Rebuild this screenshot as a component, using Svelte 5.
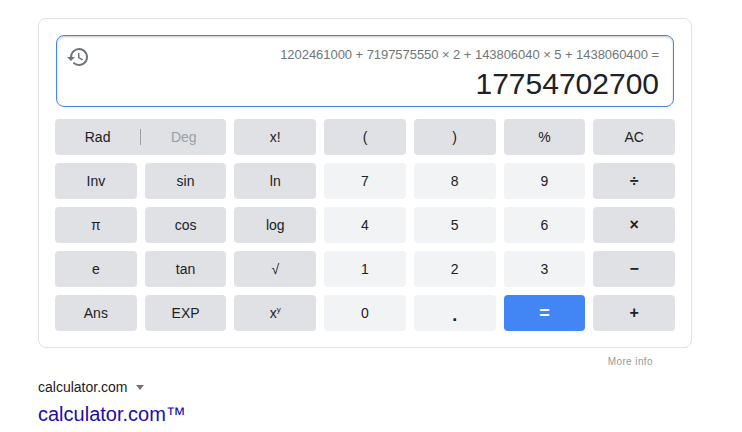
<script>
  // calculator rows below the Rad/Deg toggle, kind picks the key colour
  const firstRow = [
    { label: 'x!', kind: 'fn' },
    { label: '(', kind: 'fn' },
    { label: ')', kind: 'fn' },
    { label: '%', kind: 'fn' },
    { label: 'AC', kind: 'fn' }
  ];

  const rows = [
    [['Inv', 'fn'], ['sin', 'fn'], ['ln', 'fn'], ['7', 'num'], ['8', 'num'], ['9', 'num'], ['÷', 'op']],
    [['π', 'fn'], ['cos', 'fn'], ['log', 'fn'], ['4', 'num'], ['5', 'num'], ['6', 'num'], ['×', 'op']],
    [['e', 'fn'], ['tan', 'fn'], ['√', 'fn'], ['1', 'num'], ['2', 'num'], ['3', 'num'], ['−', 'op']]
  ];
</script>

<div class="page">
  <div class="card">
    <div class="display">
      <svg class="history" viewBox="0 0 24 24" width="24" height="24" aria-hidden="true">
        <path d="M13 3a9 9 0 0 0-9 9H1l3.89 3.89.07.14L9 12H6a7 7 0 1 1 2.05 4.95l-1.42 1.42A9 9 0 1 0 13 3zm-1 5v5l4.28 2.54.72-1.21-3.5-2.08V8H12z" />
      </svg>
      <div class="readout">
        <div class="formula">1202461000 + 7197575550 × 2 + 143806040 × 5 + 1438060400 =</div>
        <div class="result">17754702700</div>
      </div>
    </div>

    <div class="keys">
      <div class="key fn toggle">
        <span class="rad">Rad</span>
        <span class="sep"></span>
        <span class="deg">Deg</span>
      </div>
      {#each firstRow as key}
        <div class="key {key.kind}">{key.label}</div>
      {/each}

      {#each rows as row}
        {#each row as [label, kind]}
          <div class="key {kind}">{label}</div>
        {/each}
      {/each}

      <div class="key fn">Ans</div>
      <div class="key fn">EXP</div>
      <div class="key fn">x<sup>y</sup></div>
      <div class="key num">0</div>
      <div class="key num dot">.</div>
      <div class="key equals">=</div>
      <div class="key op">+</div>
    </div>
  </div>

  <div class="more"><span>More info</span></div>

  <div class="source">
    <span>calculator.com</span>
    <span class="caret"></span>
  </div>
  <div class="title">calculator.com™</div>
</div>

<style>
  :global(body) {
    background: #fff;
    font-family: "Liberation Sans", Arial, sans-serif;
  }

  .page {
    width: 654px;
    padding: 18px 0 0 38px;
  }

  .card {
    box-sizing: border-box;
    border: 1px solid #dfe1e5;
    border-radius: 8px;
    padding: 16px;
    height: 330px;
  }

  .display {
    box-sizing: border-box;
    height: 72px;
    margin: 0 1px 12px 1px;
    border: 1px solid #4285f4;
    border-radius: 8px;
    box-shadow: inset 0 1px 2px rgba(60, 64, 67, 0.3);
    display: flex;
    justify-content: space-between;
    padding: 9px 14px 0 9px;
  }

  .history {
    fill: #70757a;
    flex: none;
  }

  .readout {
    text-align: right;
  }

  .formula {
    font-size: 13px;
    line-height: 19px;
    letter-spacing: -0.05px;
    color: #70757a;
    margin-bottom: 2px;
  }

  .result {
    font-size: 30px;
    line-height: 36px;
    color: #202124;
  }

  .keys {
    display: grid;
    grid-template-columns: repeat(7, 1fr);
    grid-auto-rows: 36px;
    gap: 8px;
  }

  .key {
    border-radius: 4px;
    display: flex;
    align-items: center;
    justify-content: center;
    font-size: 14px;
    color: #202124;
  }

  .fn,
  .op {
    background: #dfe1e5;
  }

  .num {
    background: #f1f3f4;
  }

  .op {
    font-size: 16px;
    font-weight: 700;
  }

  .equals {
    background: #4285f4;
    color: #fff;
    font-size: 18px;
    font-weight: 700;
  }

  .dot {
    font-size: 18px;
    font-weight: 700;
    padding-top: 4px;
    box-sizing: border-box;
  }

  .toggle {
    grid-column: span 2;
    display: grid;
    grid-template-columns: 1fr 1px 1fr;
    justify-items: center;
  }

  .sep {
    width: 1px;
    height: 16px;
    background: #9aa0a6;
  }

  .deg {
    color: #9aa0a6;
  }

  sup {
    font-size: 8px;
    line-height: 0;
    margin-bottom: 7px;
  }

  .more {
    display: flex;
    justify-content: flex-end;
    padding: 7px 39px 0 0;
    font-size: 10px;
    line-height: 13px;
    letter-spacing: 0.4px;
    color: #999;
  }

  .source {
    display: flex;
    align-items: center;
    gap: 8px;
    margin-top: 9px;
    font-size: 14px;
    line-height: 20px;
    color: #202124;
  }

  .caret {
    width: 0;
    height: 0;
    margin-left: 1px;
    border-left: 4px solid transparent;
    border-right: 4px solid transparent;
    border-top: 5px solid #70757a;
  }

  .title {
    margin-top: 4px;
    font-size: 20px;
    line-height: 26px;
    color: #1a0dab;
  }
</style>
